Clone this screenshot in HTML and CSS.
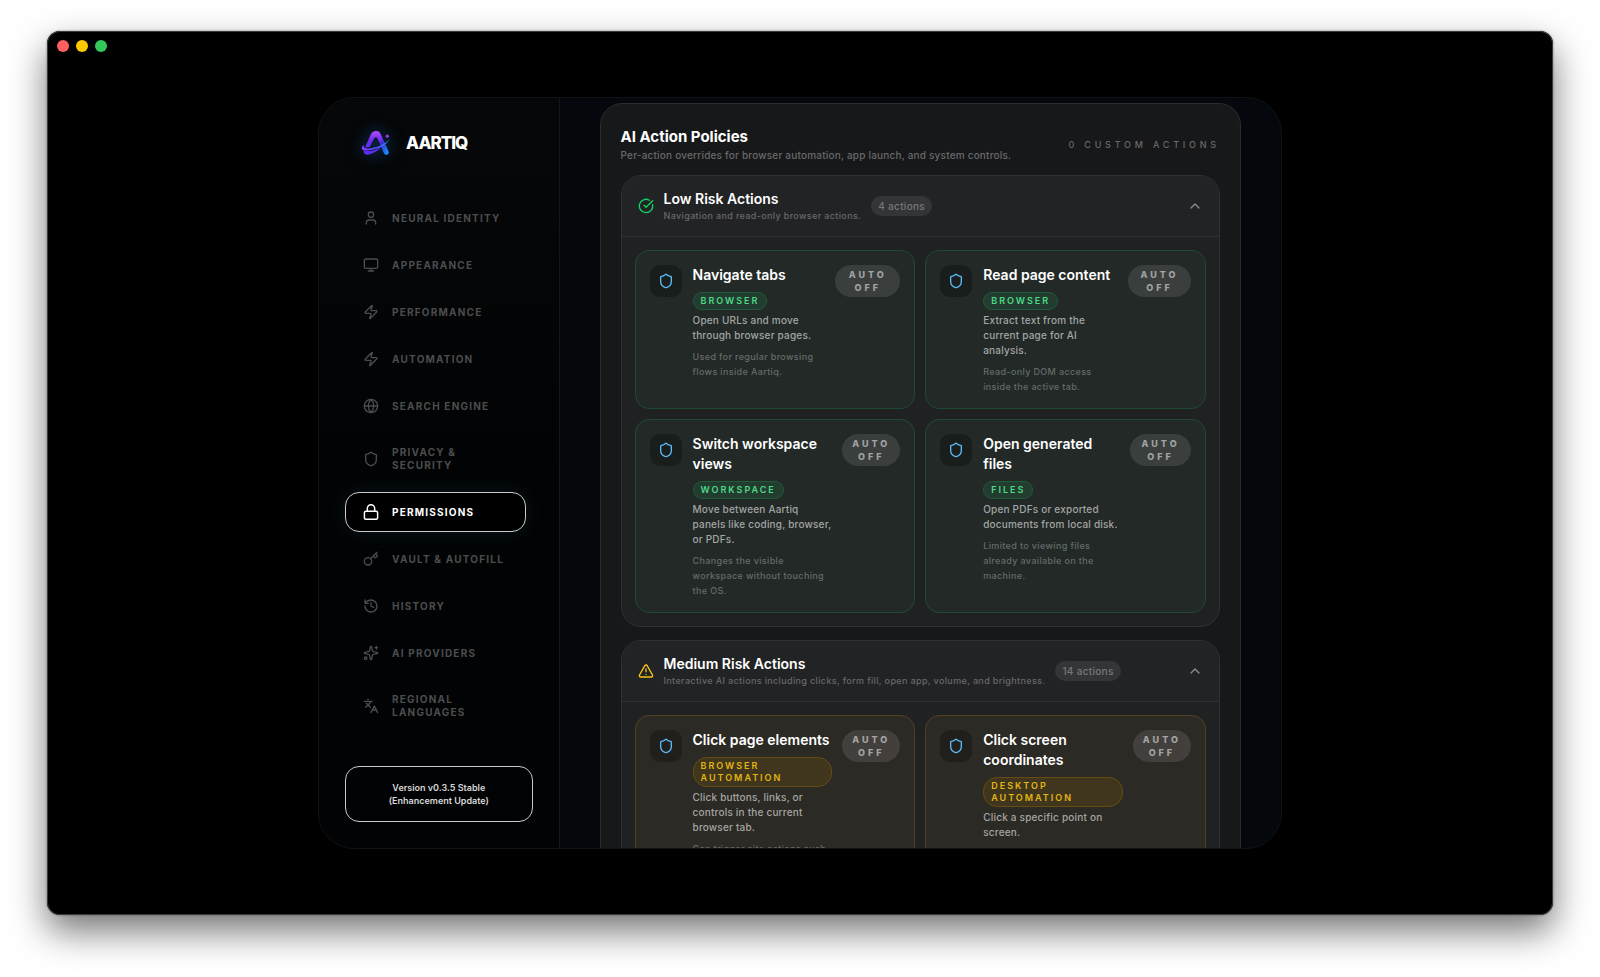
FILE: index.html
```html
<!DOCTYPE html>
<html lang="en">
<head>
    <meta charset="UTF-8">
    <meta name="viewport" content="width=device-width, initial-scale=1.0">
    <title>Aartiq Settings</title>
    <link rel="stylesheet" href="styles.css">
</head>
<body>
    <!-- Shared icon shapes -->
    <svg class="sprite" aria-hidden="true">
        <symbol id="shield" viewBox="0 0 24 24"><path d="M20 13c0 5-3.500 7.500-7.660 8.950a1 1 0 0 1-.67-.01C7.500 20.500 4 18 4 13V6a1 1 0 0 1 1-1c2 0 4.500-1.200 6.240-2.720a1.170 1.170 0 0 1 1.520 0C14.510 3.810 17 5 19 5a1 1 0 0 1 1 1z"/></symbol>
        <symbol id="zap" viewBox="0 0 24 24"><path d="M4 14a1 1 0 0 1-.78-1.630l9.900-10.200a.5.5 0 0 1 .86.460l-1.920 6.020A1 1 0 0 0 13 10h7a1 1 0 0 1 .78 1.630l-9.900 10.200a.5.5 0 0 1-.86-.46l1.920-6.020A1 1 0 0 0 11 14z"/></symbol>
        <symbol id="chevron" viewBox="0 0 24 24"><path d="m18 15-6-6-6 6"/></symbol>
    </svg>

    <div class="window">
        <div class="traffic">
            <button class="light red" aria-label="Close"></button>
            <button class="light yellow" aria-label="Minimize"></button>
            <button class="light green" aria-label="Zoom"></button>
        </div>

        <div class="dialog">
            <aside class="sidebar">
                <div class="brand">
                    <svg class="logo" viewBox="0 0 30 26" aria-hidden="true">
                        <defs>
                            <linearGradient id="peak" x1="0" y1="0" x2="0" y2="1">
                                <stop offset="0" stop-color="#b04cff"/>
                                <stop offset="0.6" stop-color="#6a2bea"/>
                                <stop offset="1" stop-color="#5a35ff"/>
                            </linearGradient>
                            <linearGradient id="leg" x1="0" y1="0" x2="1" y2="1">
                                <stop offset="0" stop-color="#8a35e8"/>
                                <stop offset="0.5" stop-color="#3a2bd0"/>
                                <stop offset="1" stop-color="#12a0ff"/>
                            </linearGradient>
                            <linearGradient id="ring" x1="0" y1="0" x2="1" y2="0">
                                <stop offset="0" stop-color="#8a3cff"/>
                                <stop offset="0.5" stop-color="#4d50ff"/>
                                <stop offset="1" stop-color="#2b9cff"/>
                            </linearGradient>
                        </defs>
                        <path d="M15 1c2.500 0 4 1.300 5 3.600l7.600 17c.7 1.800-.5 3.200-2.100 3.200-1.300 0-2.100-.6-2.700-1.900L15.600 6.500 12.500 3z" fill="url(#leg)"/>
                        <path d="M15 1c-2.700 0-4.200 1.400-5.200 3.600L4 17.500l4.800-.8 4.600-8.600c.7-1.200 2.500-1.200 3.100 0l2 4 3.600-.5L19.700 4.400C18.700 2.200 17.400 1 15 1z" fill="url(#peak)"/>
                        <path d="M2.500 20.500c6 1.500 13-.5 19-4.500-4 4.300-9 7.800-14.500 8.800-2.500.3-4.600-1.300-4.500-4.300z" fill="#5a2cf0"/>
                        <path d="M3.500 14.200C-.5 17.500-.3 20.300 4.500 20.500 13 20.800 26 15.500 28.800 9c-3.300 4.900-14.300 9.300-21.600 9.500-4.200.1-5.400-1.600-3.700-4.300z" fill="url(#ring)"/>
                        <circle cx="26.300" cy="6.200" r="1.600" fill="#9a3df5"/>
                    </svg>
                    <span>AARTIQ</span>
                </div>

                <nav class="nav">
                    <a href="#identity"><svg class="icon" viewBox="0 0 24 24"><circle cx="12" cy="7" r="4"/><path d="M19 21v-2a4 4 0 0 0-4-4H9a4 4 0 0 0-4 4v2"/></svg><span>Neural Identity</span></a>
                    <a href="#appearance"><svg class="icon" viewBox="0 0 24 24"><rect x="2" y="3" width="20" height="14" rx="2"/><path d="M8 21h8M12 17v4"/></svg><span>Appearance</span></a>
                    <a href="#performance"><svg class="icon"><use href="#zap"/></svg><span>Performance</span></a>
                    <a href="#automation"><svg class="icon"><use href="#zap"/></svg><span>Automation</span></a>
                    <a href="#search"><svg class="icon" viewBox="0 0 24 24"><circle cx="12" cy="12" r="10"/><path d="M12 2a14.500 14.500 0 0 0 0 20 14.500 14.500 0 0 0 0-20M2 12h20"/></svg><span>Search Engine</span></a>
                    <a href="#privacy"><svg class="icon"><use href="#shield"/></svg><span>Privacy &amp; Security</span></a>
                    <a href="#permissions" class="active" aria-current="page"><svg class="icon" viewBox="0 0 24 24"><rect x="3" y="11" width="18" height="11" rx="2"/><path d="M7 11V7a5 5 0 0 1 10 0v4"/></svg><span>Permissions</span></a>
                    <a href="#vault"><svg class="icon" viewBox="0 0 24 24"><path d="m15.500 7.500 2.300 2.300a1 1 0 0 0 1.400 0l2.100-2.100a1 1 0 0 0 0-1.400L19 4M21 2l-9.600 9.600"/><circle cx="7.500" cy="15.500" r="5.500"/></svg><span>Vault &amp; Autofill</span></a>
                    <a href="#history"><svg class="icon" viewBox="0 0 24 24"><path d="M3 12a9 9 0 1 0 9-9 9.750 9.750 0 0 0-6.740 2.740L3 8M3 3v5h5M12 7v5l4 2"/></svg><span>History</span></a>
                    <a href="#providers"><svg class="icon" viewBox="0 0 24 24"><path d="M11.017 2.814a1 1 0 0 1 1.966 0l1.051 5.558a2 2 0 0 0 1.594 1.594l5.558 1.051a1 1 0 0 1 0 1.966l-5.558 1.051a2 2 0 0 0-1.594 1.594l-1.051 5.558a1 1 0 0 1-1.966 0l-1.051-5.558a2 2 0 0 0-1.594-1.594l-5.558-1.051a1 1 0 0 1 0-1.966l5.558-1.051a2 2 0 0 0 1.594-1.594zM20 2v4M22 4h-4"/><circle cx="4" cy="20" r="2"/></svg><span>AI Providers</span></a>
                    <a href="#languages"><svg class="icon" viewBox="0 0 24 24"><path d="m5 8 6 6M4 14l6-6 2-3M2 5h12M7 2h1M22 22l-5-10-5 10M14 18h6"/></svg><span>Regional Languages</span></a>
                </nav>

                <div class="version">Version v0.3.5 Stable<br>(Enhancement Update)</div>
            </aside>

            <main class="content">
                <section class="panel">
                    <header class="panel-head">
                        <div>
                            <h1>AI Action Policies</h1>
                            <p>Per-action overrides for browser automation, app launch, and system controls.</p>
                        </div>
                        <span class="custom">0 custom actions</span>
                    </header>

                    <section class="group low">
                        <button class="group-head" aria-expanded="true">
                            <svg class="icon status" viewBox="0 0 24 24"><path d="M21.801 10A10 10 0 1 1 17 3.335M9 11l3 3L22 4"/></svg>
                            <span class="group-text">
                                <span class="group-title">Low Risk Actions</span>
                                <span class="group-sub">Navigation and read-only browser actions.</span>
                            </span>
                            <span class="count">4 actions</span>
                            <svg class="icon arrow"><use href="#chevron"/></svg>
                        </button>
                        <div class="cards">
                            <article class="card">
                                <div class="lead">
                                    <div class="badge"><svg class="icon"><use href="#shield"/></svg></div>
                                    <div class="info">
                                        <h2>Navigate tabs</h2>
                                        <span class="tag">Browser</span>
                                        <p class="desc">Open URLs and move through browser pages.</p>
                                        <p class="note">Used for regular browsing flows inside Aartiq.</p>
                                    </div>
                                </div>
                                <button class="auto">Auto Off</button>
                            </article>
                            <article class="card">
                                <div class="lead">
                                    <div class="badge"><svg class="icon"><use href="#shield"/></svg></div>
                                    <div class="info">
                                        <h2>Read page content</h2>
                                        <span class="tag">Browser</span>
                                        <p class="desc">Extract text from the current page for AI analysis.</p>
                                        <p class="note">Read-only DOM access inside the active tab.</p>
                                    </div>
                                </div>
                                <button class="auto">Auto Off</button>
                            </article>
                            <article class="card">
                                <div class="lead">
                                    <div class="badge"><svg class="icon"><use href="#shield"/></svg></div>
                                    <div class="info">
                                        <h2>Switch workspace views</h2>
                                        <span class="tag">Workspace</span>
                                        <p class="desc">Move between Aartiq panels like coding, browser, or PDFs.</p>
                                        <p class="note">Changes the visible workspace without touching the OS.</p>
                                    </div>
                                </div>
                                <button class="auto">Auto Off</button>
                            </article>
                            <article class="card">
                                <div class="lead">
                                    <div class="badge"><svg class="icon"><use href="#shield"/></svg></div>
                                    <div class="info">
                                        <h2>Open generated files</h2>
                                        <span class="tag">Files</span>
                                        <p class="desc">Open PDFs or exported documents from local disk.</p>
                                        <p class="note">Limited to viewing files already available on the machine.</p>
                                    </div>
                                </div>
                                <button class="auto">Auto Off</button>
                            </article>
                        </div>
                    </section>

                    <section class="group medium">
                        <button class="group-head" aria-expanded="true">
                            <svg class="icon status" viewBox="0 0 24 24"><path d="m21.730 18-8-14a2 2 0 0 0-3.480 0l-8 14A2 2 0 0 0 4 21h16a2 2 0 0 0 1.730-3M12 9v4M12 17h.01"/></svg>
                            <span class="group-text">
                                <span class="group-title">Medium Risk Actions</span>
                                <span class="group-sub">Interactive AI actions including clicks, form fill, open app, volume, and brightness.</span>
                            </span>
                            <span class="count">14 actions</span>
                            <svg class="icon arrow"><use href="#chevron"/></svg>
                        </button>
                        <div class="cards">
                            <article class="card">
                                <div class="lead">
                                    <div class="badge"><svg class="icon"><use href="#shield"/></svg></div>
                                    <div class="info">
                                        <h2>Click page elements</h2>
                                        <span class="tag">Browser Automation</span>
                                        <p class="desc">Click buttons, links, or controls in the current browser tab.</p>
                                        <p class="note">Can trigger site actions such</p>
                                    </div>
                                </div>
                                <button class="auto">Auto Off</button>
                            </article>
                            <article class="card">
                                <div class="lead">
                                    <div class="badge"><svg class="icon"><use href="#shield"/></svg></div>
                                    <div class="info">
                                        <h2>Click screen coordinates</h2>
                                        <span class="tag">Desktop Automation</span>
                                        <p class="desc">Click a specific point on screen.</p>
                                    </div>
                                </div>
                                <button class="auto">Auto Off</button>
                            </article>
                        </div>
                    </section>
                </section>
            </main>
        </div>
    </div>
</body>
</html>
```

FILE: styles.css
```css
* {
    box-sizing: border-box;
}

body {
    margin: 0;
    height: 100vh;
    padding: 31px 47px 62px;
    background: #fff;
    font-family: Inter, "Liberation Sans", sans-serif;
    color: #fff;
    overflow: hidden;
}

h1, h2, p {
    margin: 0;
}

button {
    font-family: inherit;
    border: none;
    padding: 0;
    cursor: pointer;
}

.sprite {
    display: none;
}

.icon {
    width: 16px;
    height: 16px;
    flex-shrink: 0;
    fill: none;
    stroke: currentColor;
    stroke-width: 2;
    stroke-linecap: round;
    stroke-linejoin: round;
}

/* Window */
.window {
    position: relative;
    height: 100%;
    display: flex;
    align-items: center;
    justify-content: center;
    background: #000;
    border-radius: 13px;
    box-shadow: inset 0 0 0 1px #3c3c3c, 0 0 2px rgba(0, 0, 0, 0.5), 0 16px 36px rgba(0, 0, 0, 0.55);
}

.traffic {
    position: absolute;
    top: 9px;
    left: 10px;
    display: flex;
    gap: 7px;
}

.light {
    width: 12px;
    height: 12px;
    border-radius: 50%;
}

.red {
    background: #ff5f60;
}

.yellow {
    background: #fec900;
}

.green {
    background: #34c759;
}

.dialog {
    width: 64%;
    height: 85%;
    display: flex;
    background: #04080d;
    border: 1px solid #101314;
    border-radius: 36px;
    overflow: hidden;
}

/* Sidebar */
.sidebar {
    width: 25%;
    flex-shrink: 0;
    display: flex;
    flex-direction: column;
    padding: 29px 26px 26px;
    background: linear-gradient(#050708, #020304 50%);
    border-right: 1px solid #14171a;
}

.brand {
    display: flex;
    align-items: center;
    gap: 15px;
    height: 32px;
    padding-left: 16px;
    margin-bottom: 39px;
    font-size: 17px;
    font-weight: 800;
    letter-spacing: -1px;
}

.logo {
    width: 30px;
    height: 26px;
    filter: drop-shadow(0 0 8px rgba(30, 120, 230, 0.5));
}

.nav {
    display: flex;
    flex-direction: column;
    gap: 7px;
}

.nav a {
    display: flex;
    align-items: center;
    gap: 13px;
    min-height: 40px;
    margin-right: 7px;
    padding: 11px 17px;
    border: 1px solid transparent;
    border-radius: 14px;
    color: #4c4d4e;
    font-size: 10px;
    font-weight: 700;
    line-height: 13px;
    letter-spacing: 0.12em;
    text-transform: uppercase;
    text-decoration: none;
}

.nav span {
    padding: 1px 0;
}

.nav a.active {
    color: #fff;
    border-color: #c9cacb;
    background: #000;
    box-shadow: 0 0 20px rgba(60, 150, 160, 0.15);
}

.nav a.active .icon {
    transform: scale(1.1);
}

.version {
    margin-top: auto;
    padding: 14px;
    border: 1px solid #c9cacb;
    border-radius: 14px;
    color: #d6d6d6;
    font-size: 9px;
    font-weight: 600;
    line-height: 13px;
    text-align: center;
}

/* Content */
.content {
    flex: 1;
    min-width: 0;
    padding: 5px 40px 0;
    overflow: hidden;
}

.panel {
    padding: 22px 20px 20px;
    background: #17181a;
    border: 1px solid #2a2c2e;
    border-radius: 22px;
}

.panel-head {
    display: flex;
    align-items: center;
    justify-content: space-between;
    margin-bottom: 13px;
}

h1 {
    font-size: 15px;
    font-weight: 700;
    line-height: 22px;
}

.panel-head p {
    color: #68696b;
    font-size: 10px;
    font-weight: 500;
    line-height: 14px;
    letter-spacing: 0.02em;
}

.custom {
    color: #68696b;
    font-size: 9px;
    font-weight: 500;
    letter-spacing: 0.42em;
    text-transform: uppercase;
}

.group {
    margin-bottom: 13px;
    background: #202123;
    border: 1px solid #303133;
    border-radius: 20px;
    overflow: hidden;
}

.group-head {
    display: flex;
    align-items: center;
    width: 100%;
    min-height: 61px;
    padding: 13px 16px;
    background: #222325;
    border-bottom: 1px solid #303133;
    color: #fff;
    text-align: left;
}

.group-text {
    margin: 0 10px;
}

.group-title {
    display: block;
    font-size: 14px;
    font-weight: 600;
    line-height: 18px;
}

.group-sub {
    display: block;
    color: #68696b;
    font-size: 9px;
    font-weight: 500;
    line-height: 15px;
    letter-spacing: 0.04em;
}

.count {
    padding: 0 7px;
    border-radius: 10px;
    background: #343537;
    color: #77787a;
    font-size: 10px;
    font-weight: 500;
    line-height: 20px;
    letter-spacing: 0.03em;
}

.arrow {
    margin-left: auto;
    color: #8b8c8d;
}

.low .status {
    color: #12d664;
}

.medium .status {
    color: #fac416;
}

/* Action cards */
.cards {
    display: grid;
    grid-template-columns: 1fr 1fr;
    gap: 10px;
    padding: 13px;
}

.card {
    display: flex;
    align-items: flex-start;
    justify-content: space-between;
    gap: 10px;
    padding: 14px;
    border: 1px solid #1e4a33;
    border-radius: 14px;
    background: #222927;
}

.lead {
    display: flex;
    align-items: flex-start;
    gap: 11px;
    min-width: 0;
}

.badge {
    display: flex;
    align-items: center;
    justify-content: center;
    width: 32px;
    height: 32px;
    flex-shrink: 0;
    border-radius: 10px;
    background: #191d1c;
    color: #5bbcfa;
}

h2 {
    margin-bottom: 7px;
    font-size: 14px;
    font-weight: 600;
    line-height: 20px;
}

.tag {
    display: table;
    padding: 2px 7px;
    border: 1px solid #1f5a3a;
    border-radius: 14px;
    background: #223c30;
    color: #4fd886;
    font-size: 9px;
    font-weight: 600;
    line-height: 12px;
    letter-spacing: 2px;
    text-transform: uppercase;
}

.desc {
    margin-top: 3px;
    color: #a2a5a4;
    font-size: 10px;
    font-weight: 500;
    line-height: 15px;
    letter-spacing: 0.02em;
}

.note {
    margin-top: 6px;
    color: #666b69;
    font-size: 9px;
    font-weight: 500;
    line-height: 15px;
    letter-spacing: 0.04em;
}

.auto {
    padding: 3px 10px;
    border-radius: 16px;
    background: #3a3f3d;
    color: #a0a3a2;
    font-size: 9px;
    font-weight: 800;
    line-height: 13px;
    letter-spacing: 3px;
    text-transform: uppercase;
}

.medium .lead {
    flex-basis: 400px;
}

.medium .card {
    background: #2c2a25;
    border-color: #51401f;
}

.medium .badge {
    background: #201f1c;
}

.medium .tag {
    background: #40351d;
    border-color: #664c12;
    color: #e2b714;
}

.medium .desc {
    color: #a6a5a2;
}

.medium .note {
    color: #6c6b67;
}

.medium .auto {
    background: #423f3c;
    color: #a5a4a2;
}
```
